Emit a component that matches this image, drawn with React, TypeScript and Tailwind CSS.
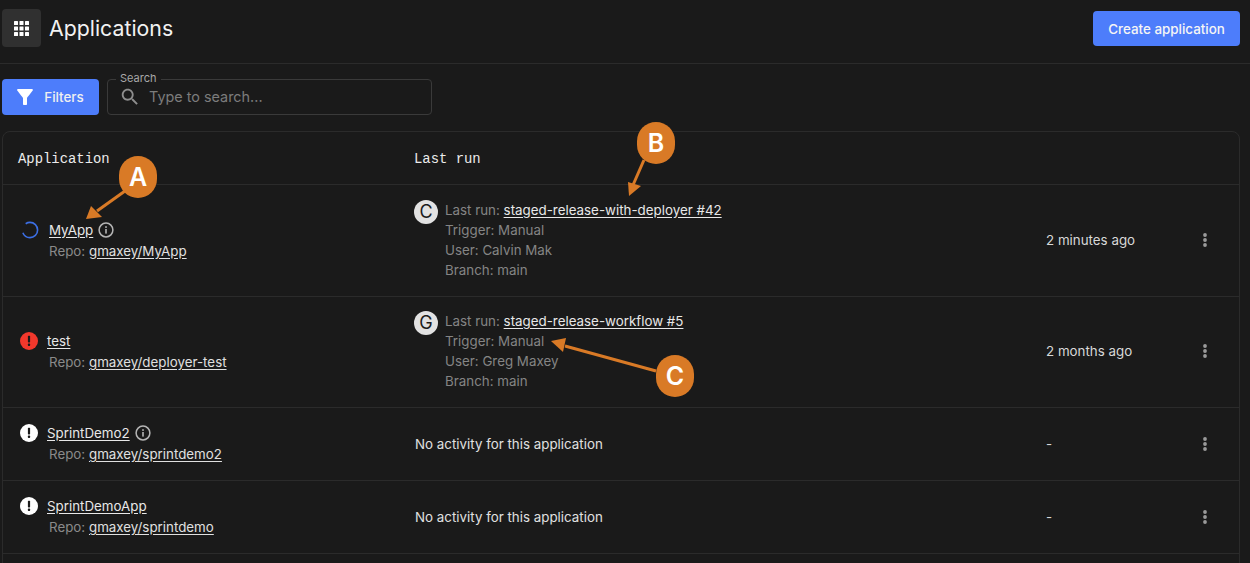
const INTER = "font-['Inter',sans-serif]";

const rows = [
  {
    status: "loading",
    name: "MyApp",
    info: true,
    repo: "gmaxey/MyApp",
    avatar: "C",
    run: "staged-release-with-deployer #42",
    user: "Calvin Mak",
    time: "2 minutes ago",
    height: "h-[112px]",
  },
  {
    status: "error",
    name: "test",
    info: false,
    repo: "gmaxey/deployer-test",
    avatar: "G",
    run: "staged-release-workflow #5",
    user: "Greg Maxey",
    time: "2 months ago",
    height: "h-[111px]",
  },
  {
    status: "idle",
    name: "SprintDemo2",
    info: true,
    repo: "gmaxey/sprintdemo2",
    time: "-",
    height: "h-[73px]",
  },
  {
    status: "idle",
    name: "SprintDemoApp",
    info: false,
    repo: "gmaxey/sprintdemo",
    time: "-",
    height: "h-[73px]",
  },
];

const InfoIcon = () => (
  <svg width="16" height="16" viewBox="0 0 16 16" fill="none" className="text-[#b5b5b5]">
    <circle cx="8" cy="8" r="6.9" stroke="currentColor" strokeWidth="1.5" />
    <rect x="7.2" y="7" width="1.6" height="4.6" fill="currentColor" />
    <rect x="7.2" y="4.2" width="1.6" height="1.7" fill="currentColor" />
  </svg>
);

const StatusIcon = ({ status }: { status: string }) => {
  if (status === "loading") {
    return (
      <svg width="18" height="18" viewBox="0 0 18 18" fill="none" className="mr-[10px] ml-[1px]">
        <circle
          cx="9"
          cy="9"
          r="7.6"
          stroke="#3c6fe4"
          strokeWidth="1.6"
          strokeDasharray="38 10"
          strokeDashoffset="-31"
        />
      </svg>
    );
  }
  const bg = status === "error" ? "#f2382c" : "#ffffff";
  return (
    <svg width="18" height="18" viewBox="0 0 18 18" className="mr-[9px]">
      <circle cx="9" cy="9" r="9" fill={bg} />
      <rect x="7.9" y="3.8" width="2.2" height="6.6" rx="0.6" fill="#1a1a1a" />
      <rect x="7.9" y="11.6" width="2.2" height="2.3" rx="0.6" fill="#1a1a1a" />
    </svg>
  );
};

const MoreIcon = () => (
  <svg width="4" height="14" viewBox="0 0 4 14" fill="#9a9a9a">
    <circle cx="2" cy="2" r="1.9" />
    <circle cx="2" cy="7" r="1.9" />
    <circle cx="2" cy="12" r="1.9" />
  </svg>
);

export default function App() {
  return (
    <main className={`relative h-[563px] w-[1250px] overflow-hidden bg-[#1a1a1a] text-[13.35px] leading-5 text-[#e8e8e8] ${INTER}`}>
      {/* header */}
      <header className="flex h-[64px] items-start justify-between border-b border-[#2b2b2b] pr-[10px] pl-[2px]">
        <div className="mt-[9px] flex items-center gap-[8px]">
          <div className="flex h-[38px] w-[39px] items-center justify-center rounded-[4px] bg-[#303030]">
            <svg width="15" height="15" viewBox="0 0 15 15" fill="#ffffff">
              <rect x="0" y="0" width="4" height="4" rx="0.5" />
              <rect x="5.5" y="0" width="4" height="4" rx="0.5" />
              <rect x="11" y="0" width="4" height="4" rx="0.5" />
              <rect x="0" y="5.5" width="4" height="4" rx="0.5" />
              <rect x="5.5" y="5.5" width="4" height="4" rx="0.5" />
              <rect x="11" y="5.5" width="4" height="4" rx="0.5" />
              <rect x="0" y="11" width="4" height="4" rx="0.5" />
              <rect x="5.5" y="11" width="4" height="4" rx="0.5" />
              <rect x="11" y="11" width="4" height="4" rx="0.5" />
            </svg>
          </div>
          <h1 className="text-[21.3px] leading-7 font-normal text-[#f2f2f2]">Applications</h1>
        </div>
        <button className="mt-[11px] h-[35px] w-[147px] rounded-[4px] bg-[#4d7dfb] text-[13.4px] font-medium text-[#f5f5f5]">
          Create application
        </button>
      </header>

      {/* filters */}
      <div className="flex items-center gap-[8px] px-[2px] pt-[15px] pb-[16px]">
        <button className="flex h-[36px] w-[97px] items-center justify-center gap-[7px] rounded-[4px] bg-[#4d7dfb] pr-[4px] text-[13.4px] font-medium text-[#f0f0f0]">
          <svg width="24" height="24" viewBox="0 0 24 24" fill="#ffffff">
            <path d="M4.25 5.61C6.27 8.2 10 13 10 13v6c0 .55.45 1 1 1h2c.55 0 1-.45 1-1v-6s3.72-4.8 5.74-7.39c.51-.66.04-1.61-.79-1.61H5.04c-.83 0-1.3.95-.79 1.61z" />
          </svg>
          Filters
        </button>
        <div className="relative flex h-[36px] w-[325px] items-center gap-[8px] rounded-[4px] border border-[#3a3a3a] pl-[11px]">
          <span className="absolute top-[-9px] left-[8px] bg-[#1a1a1a] px-[4px] text-[11px] leading-[14px] text-[#a8a8a8]">
            Search
          </span>
          <svg width="22" height="22" viewBox="0 0 24 24" fill="#8e8e8e">
            <path d="M15.5 14h-.79l-.28-.27C15.41 12.59 16 11.11 16 9.5 16 5.91 13.09 3 9.5 3S3 5.91 3 9.5 5.91 16 9.5 16c1.61 0 3.09-.59 4.23-1.57l.27.28v.79l5 4.99L20.49 19l-4.99-5zm-6 0C7.01 14 5 11.99 5 9.5S7.01 5 9.5 5 14 7.01 14 9.5 11.99 14 9.5 14z" />
          </svg>
          <input
            placeholder="Type to search..."
            className="flex-1 bg-transparent text-[14.4px] outline-none placeholder:text-[#7c7c7c]"
          />
        </div>
      </div>

      {/* table */}
      <section className="mr-[10px] ml-[2px] h-[440px] rounded-t-[8px] border border-[#2b2b2b]">
        <div className="grid h-[53px] grid-cols-[412px_631px_1fr] items-center border-b border-[#2b2b2b] pt-[2px] font-['Liberation_Mono',monospace] text-[13.9px] text-[#ececec]">
          <div className="pl-[15px]">Application</div>
          <div className="-ml-[1px]">Last run</div>
        </div>
        {rows.map((row) => (
          <div
            key={row.name}
            className={`grid grid-cols-[412px_631px_1fr] items-center border-b border-[#2b2b2b] ${row.height}`}
          >
            <div className="pb-[2px] pl-[17px]">
              <div className="flex h-[22px] items-center">
                <StatusIcon status={row.status} />
                <a className="text-[#e8e8e8] underline underline-offset-2">{row.name}</a>
                {row.info && (
                  <span className="ml-[5px] flex">
                    <InfoIcon />
                  </span>
                )}
              </div>
              <div className="pl-[29px] text-[#8a8a8a]">
                Repo: <a className="text-[#e0e0e0] underline underline-offset-2">{row.repo}</a>
              </div>
            </div>

            {row.avatar ? (
              <div className="-ml-[1px] flex gap-[7px] pb-[2px]">
                <div className="flex h-[24px] w-[24px] shrink-0 items-center justify-center rounded-full bg-[#e2e2e2] text-[18px] text-[#1c1c1c]">
                  {row.avatar}
                </div>
                <div className="text-[#858585]">
                  <div>
                    Last run: <a className="text-[#e8e8e8] underline underline-offset-2">{row.run}</a>
                  </div>
                  <div>Trigger: Manual</div>
                  <div>User: {row.user}</div>
                  <div>Branch: main</div>
                </div>
              </div>
            ) : (
              <div className="text-[#e0e0e0]">No activity for this application</div>
            )}

            <div className={`flex items-center justify-between pr-[32px] text-[#d8d8d8] ${row.avatar ? "pb-[2px]" : ""}`}>
              <span>{row.time}</span>
              <MoreIcon />
            </div>
          </div>
        ))}
      </section>

      {/* callouts drawn over the screenshot */}
      <svg className="pointer-events-none absolute inset-0" width="1250" height="563" fill="#d97a26">
        <line x1="125" y1="191" x2="97" y2="211" stroke="#d97a26" strokeWidth="3" />
        <polygon points="86,219 91,206 102,217" />
        <line x1="644" y1="160" x2="633" y2="185" stroke="#d97a26" strokeWidth="3" />
        <polygon points="629,196 628,182 641,186" />
        <line x1="656" y1="371" x2="565" y2="346" stroke="#d97a26" strokeWidth="3" />
        <polygon points="551,341 566,338 563,352" />
      </svg>
      {[
        { label: "A", pos: "left-[119px] top-[156px]" },
        { label: "B", pos: "left-[637px] top-[122px]" },
        { label: "C", pos: "left-[656px] top-[355px]" },
      ].map((c) => (
        <div
          key={c.label}
          className={`absolute flex h-[42px] w-[38px] items-center justify-center rounded-full bg-[#d97a26] text-[25px] font-semibold text-white ${c.pos}`}
        >
          {c.label}
        </div>
      ))}
    </main>
  );
}
